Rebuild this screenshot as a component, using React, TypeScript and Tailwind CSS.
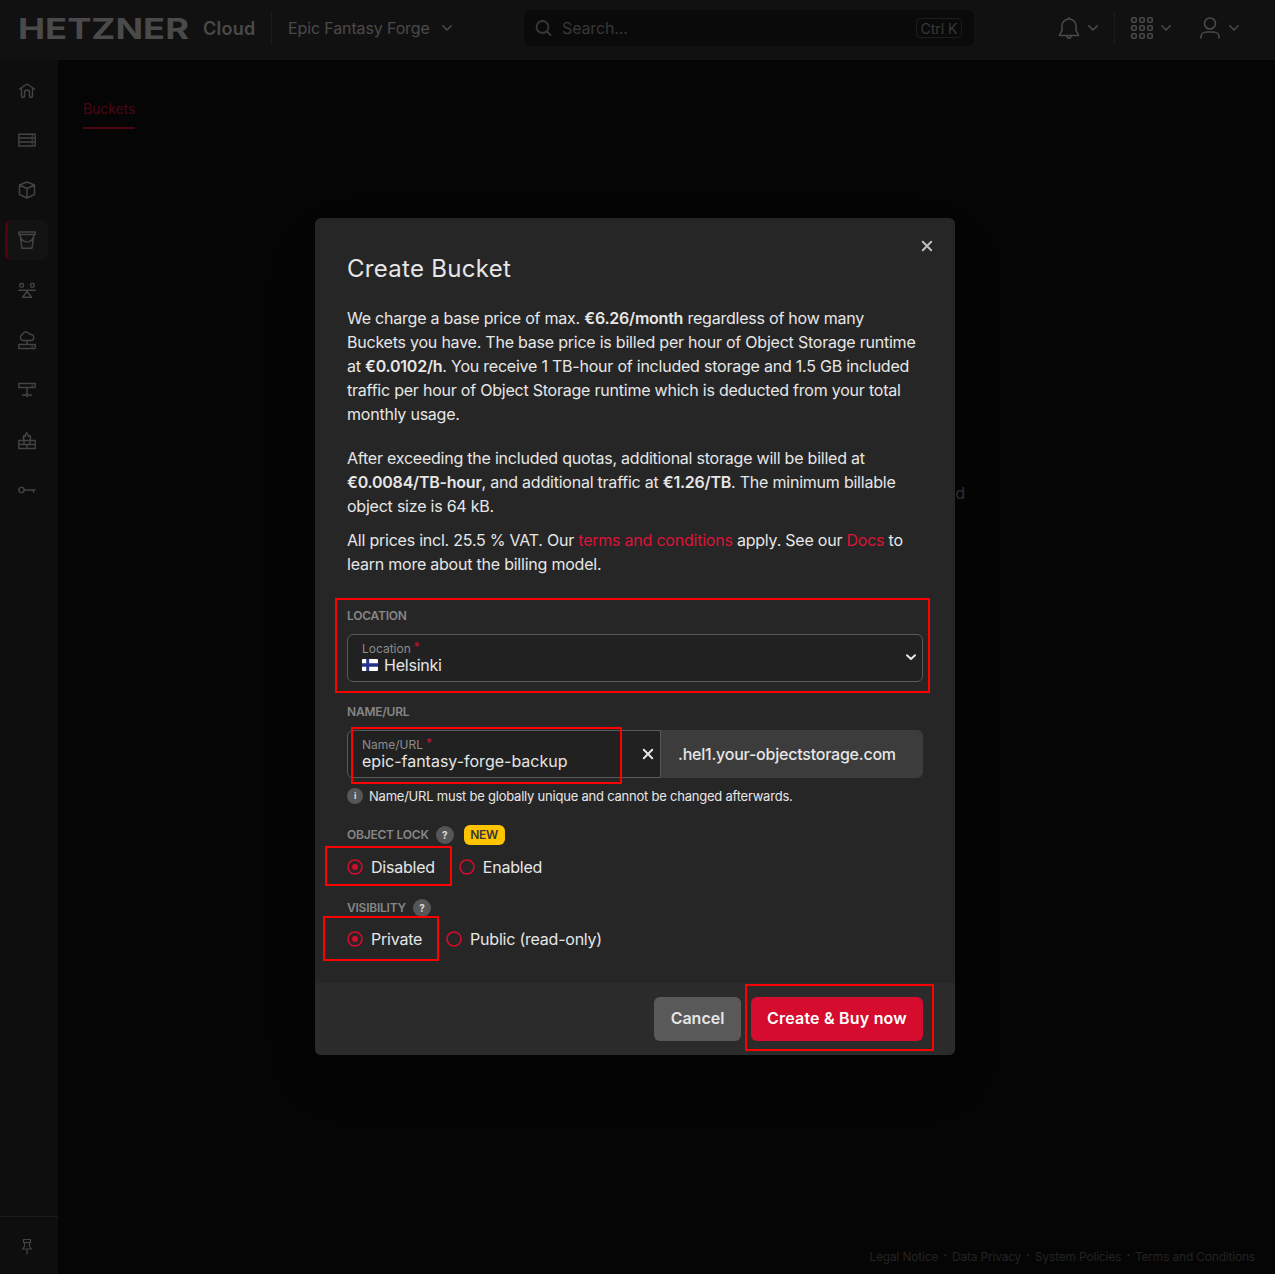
import React from "react";

const Svg = ({
  size = 20,
  box = size,
  width = 1.4,
  className = "",
  children,
}: {
  size?: number;
  box?: number;
  width?: number;
  className?: string;
  children: React.ReactNode;
}) => (
  <svg
    width={size}
    height={size}
    viewBox={`0 0 ${box} ${box}`}
    fill="none"
    stroke="currentColor"
    strokeWidth={width}
    strokeLinecap="round"
    strokeLinejoin="round"
    className={`shrink-0 ${className}`}
  >
    {children}
  </svg>
);

const navItems = [
  {
    name: "home",
    icon: (
      <path d="M2.500 9 10 4l7.500 5M4.500 8.200v7.800c0 1 .5 1.500 1.500 1.500s1.500-.5 1.500-1.500v-3.500a2.500 2.500 0 0 1 5 0V16c0 1 .5 1.500 1.500 1.500s1.500-.5 1.500-1.500V8.200" />
    ),
  },
  {
    name: "servers",
    icon: (
      <path d="M1.800 4.200h16.400v11.800H1.800zM1.800 8h16.400M1.800 12h16.400M15 6h.5M15 10h.5M15 14h.5" />
    ),
  },
  {
    name: "volumes",
    icon: (
      <path d="m10 2 7.500 3v9.500L10 18l-7.500-3.500V5zM2.500 5 10 8.500 17.500 5M10 8.500V18" />
    ),
  },
  {
    name: "buckets",
    active: true,
    icon: (
      <path d="M1.800 2h16.400v2.500H1.800zM3 4.500l2 13.700h10l2-13.700M3.500 7c2.500 6.500 10.500 6.500 13 0" />
    ),
  },
  {
    name: "load balancers",
    icon: (
      <>
        <rect x="2.800" y="3.500" width="3.600" height="3.600" rx="1.200" />
        <rect x="13.600" y="3.500" width="3.600" height="3.600" rx="1.200" />
        <path d="M1.800 10.300h16.400M10 11.500l-4.500 5.800h9z" />
      </>
    ),
  },
  {
    name: "storage",
    icon: (
      <path d="M6 10.500a3 3 0 0 1-.5-5.800C6.200 1.500 11 1 12.500 4.300c2.500-.3 4.300 1.200 4.300 3.200 0 1.800-1.300 3-3 3zM10 10.500v4M1.800 14.500h16.400v4H1.800zM15 16.500h.5" />
    ),
  },
  {
    name: "networks",
    icon: (
      <path d="M1.800 3.500h16.400v4H1.800zM15 5.500h.5M10 7.500v6M5.500 15h3M11.500 15h3M10 13.500l1.500 1.500-1.500 1.500L8.500 15z" />
    ),
  },
  {
    name: "firewalls",
    icon: (
      <path d="M1.800 10.500h16.400v8H1.800zM1.800 14.500h16.400M7 10.500v4M13 10.500v4M10 14.500v4M7.500 10.500C5.500 8.500 6 7 7 5.500l1 1.300c.3-1.800.8-3.300 1.800-4.300.2 2 1.300 2.500 1.700 4l1.200-1.200c1.300 2 1 4-.7 5.200" />
    ),
  },
  {
    name: "keys",
    icon: (
      <>
        <circle cx="4.500" cy="10" r="2.600" />
        <path d="M7.200 10H18M16.500 10v2.300" />
      </>
    ),
  },
];

const Chevron = () => (
  <Svg size={12} width={1.6}>
    <path d="M1.800 3.800 6 8l4.200-4.200" />
  </Svg>
);

const Header = () => {
  return (
    <header className="flex h-[60px] shrink-0 items-center bg-[#111111] pb-1 text-[#4a4a4a]">
      <svg width="173" height="40" className="ml-[18px] shrink-0 overflow-visible">
        <text
          x="0"
          y="31"
          fontSize="29"
          fontWeight="700"
          fill="currentColor"
          textLength="171"
          lengthAdjust="spacingAndGlyphs"
        >
          HETZNER
        </text>
      </svg>
      <span className="ml-3 w-[53px] text-[18px] font-semibold tracking-[0.25px]">
        Cloud
      </span>
      <div className="ml-[15px] h-8 w-px bg-[#1c1c1c]" />
      <div className="ml-4 flex w-[236px] items-center">
        <span className="w-[153px] text-base tracking-[-0.13px]">
          Epic Fantasy Forge
        </span>
        <Chevron />
      </div>
      <div className="flex h-9 w-[450px] items-center rounded-md bg-[#0a0a0a] pr-3 pl-[10px] text-[#383838]">
        <Svg size={18} width={1.8}>
          <circle cx="8.500" cy="8" r="6" />
          <path d="m13 12.500 3.500 3.500" />
        </Svg>
        <span className="ml-[10px] flex-1 text-base tracking-[-0.13px]">
          Search...
        </span>
        <span className="flex h-5 w-[46px] items-center justify-center rounded border border-[#1d1d1d] pt-px text-sm">
          Ctrl K
        </span>
      </div>
      <div className="ml-[83px] flex items-center">
        <Svg size={24} width={1.6}>
          <path d="M12 1.500V3M2.500 19.500h19c0-2-2.500-3-2.500-6V10a7 7 0 0 0-14 0v3.500c0 3-2.500 4-2.500 6zM10 20c0 3 4 3 4 0" />
        </Svg>
        <div className="ml-[6px]">
          <Chevron />
        </div>
        <div className="ml-[15px] h-8 w-px bg-[#1c1c1c]" />
        <Svg size={24} width={1.6} className="ml-[15px]">
          {[4, 12, 20].map((y) =>
            [4, 12, 20].map((x) => (
              <rect
                key={`${x}-${y}`}
                x={x - 2.25}
                y={y - 2.25}
                width="4.500"
                height="4.500"
                rx="1.400"
              />
            ))
          )}
        </Svg>
        <div className="ml-[6px]">
          <Chevron />
        </div>
        <Svg size={24} width={1.6} className="ml-[26px]">
          <circle cx="12" cy="7.500" r="5.500" />
          <path d="M3 22v-1c0-3 2.500-5 5.500-5h7c3 0 5.500 2 5.500 5v1" />
        </Svg>
        <div className="ml-[6px]">
          <Chevron />
        </div>
      </div>
    </header>
  );
};

const Sidebar = () => {
  return (
    <aside className="flex w-[58px] shrink-0 flex-col bg-[#0e0e0e] text-[#444444]">
      <nav className="flex flex-col gap-2.5 pt-2.5 pl-[5px]">
        {navItems.map((item) => (
          <a
            key={item.name}
            className={`flex h-10 w-[43px] items-center rounded-md border-l-[3px] pl-[9px] ${
              item.active
                ? "border-[#4b0511] bg-[#131313]"
                : "border-transparent"
            }`}
          >
            <Svg>{item.icon}</Svg>
          </a>
        ))}
      </nav>
      <div className="mt-auto flex h-[58px] items-center border-t border-[#1c1c1c] pt-0.5 pl-[17px]">
        <Svg width={1.2}>
          <path d="M6.500 2.500h7v3h-7zM7.500 5.500v4L5.500 12h9l-2-2.500v-4M10 12v5" />
        </Svg>
      </div>
    </aside>
  );
};

const Badge = ({ children, small = false }: { children: string; small?: boolean }) => (
  <span
    className={`flex shrink-0 items-center justify-center rounded-full bg-[#565656] font-bold text-[#dddddd] ${
      small ? "size-4 text-[9px]" : "size-[18px] text-[10px]"
    }`}
  >
    {children}
  </span>
);

const Radio = ({ label, checked = false }: { label: string; checked?: boolean }) => (
  <label className="flex items-center gap-2">
    <Svg size={16} width={1.6} className="text-[#d50c2d]">
      <circle cx="8" cy="8" r="7" />
      {checked && <circle cx="8" cy="8" r="3" fill="currentColor" stroke="none" />}
    </Svg>
    {label}
  </label>
);

const FieldLabel = ({ children }: { children: string }) => (
  <span className="text-xs leading-4 font-semibold text-[#868686]">
    {children}
  </span>
);

const InputLabel = ({ children }: { children: string }) => (
  <span className="mt-[6px] text-xs leading-4 tracking-normal text-[#8c8c8c]">
    {children}
    <span className="relative -top-0.5 ml-[3px] text-[#d50c2d]">*</span>
  </span>
);

const Cross = () => (
  <Svg size={12} width={2}>
    <path d="m1.800 1.800 8.400 8.400m0-8.400-8.400 8.400" />
  </Svg>
);

const Modal = () => {
  return (
    <div className="relative flex h-[837px] w-[640px] flex-col overflow-hidden rounded-md bg-[#262626] text-base leading-6 tracking-[-0.225px] text-[#e6e6e6] shadow-2xl">
      <div className="flex flex-1 flex-col px-8">
        <div className="flex h-[88px] justify-between">
          <h2 className="pt-[35px] text-[24px] leading-8 tracking-[0.3px] whitespace-nowrap">
            Create Bucket
          </h2>
          <button className="-mr-[10px] flex h-3 pt-[22px] text-[#bebebe]">
            <Cross />
          </button>
        </div>
        <p>
          We charge a base price of max.{" "}
          <b className="font-semibold">€6.26/month</b> regardless of how many
          <br />
          Buckets you have. The base price is billed per hour of Object Storage
          runtime at <b className="font-semibold">€0.0102/h</b>. You receive 1
          TB-hour of included storage and 1.5 GB included traffic per hour of
          Object Storage runtime which is deducted from your total monthly
          usage.
        </p>
        <p className="mt-5">
          After exceeding the included quotas, additional storage will be billed
          at <b className="font-semibold">€0.0084/TB-hour</b>, and additional
          traffic at <b className="font-semibold">€1.26/TB</b>. The minimum
          billable object size is 64 kB.
        </p>
        <p className="mt-2.5">
          All prices incl. 25.5 % VAT. Our{" "}
          <a className="text-[#dc1438]">terms and conditions</a> apply. See our{" "}
          <a className="text-[#dc1438]">Docs</a> to
          <br />
          learn more about the billing model.
        </p>

        <div className="mt-8 flex flex-col">
          <FieldLabel>LOCATION</FieldLabel>
          <div className="mt-[10px] flex h-12 items-center justify-between rounded-md border border-[#595959] bg-[#212121] pr-[5px] pl-[14px]">
            <div className="flex h-full flex-col">
              <InputLabel>Location</InputLabel>
              <span className="flex items-center gap-1.5 leading-4">
                <svg width="16" height="12" className="rounded-[1px]">
                  <path fill="#ffffff" d="M0 0h16v12H0z" />
                  <path fill="#27348b" d="M0 4.200h16v3.600H0zM4.200 0h3v12h-3z" />
                </svg>
                Helsinki
              </span>
            </div>
            <Svg size={12} width={2} className="-mt-0.5">
              <path d="M2 4.200 6 8l4-3.800" />
            </Svg>
          </div>
        </div>

        <div className="mt-[22px] flex flex-col">
          <FieldLabel>NAME/URL</FieldLabel>
          <div className="mt-[10px] flex h-12">
            <div className="flex w-[314px] items-center justify-between rounded-l-md border border-[#595959] bg-[#212121] pr-[6px] pl-[14px]">
              <div className="flex h-full flex-col">
                <InputLabel>Name/URL</InputLabel>
                <span className="leading-4 tracking-normal">
                  epic-fantasy-forge-backup
                </span>
              </div>
              <Cross />
            </div>
            <div className="flex flex-1 items-center rounded-r-md bg-[#3c3c3c] pl-[17px] font-medium">
              .hel1.your-objectstorage.com
            </div>
          </div>
          <div className="mt-[10px] flex items-center gap-1.5 text-[13px] leading-4">
            <Badge small>i</Badge>
            Name/URL must be globally unique and cannot be changed afterwards.
          </div>
        </div>

        <div className="mt-[21px] flex h-5 items-center">
          <FieldLabel>OBJECT LOCK</FieldLabel>
          <div className="ml-[7px]">
            <Badge>?</Badge>
          </div>
          <span className="ml-2.5 flex h-5 w-[41px] items-center justify-center rounded-md bg-[#ffc400] text-xs font-semibold text-[#383838]">
            NEW
          </span>
        </div>
        <div className="mt-[10px] flex gap-6">
          <Radio label="Disabled" checked />
          <Radio label="Enabled" />
        </div>

        <div className="mt-5 flex h-[18px] items-center gap-[7px]">
          <FieldLabel>VISIBILITY</FieldLabel>
          <Badge>?</Badge>
        </div>
        <div className="mt-[10px] flex gap-6">
          <Radio label="Private" checked />
          <Radio label="Public (read-only)" />
        </div>
      </div>

      <div className="flex h-[72px] items-center justify-end gap-2.5 bg-[#2b2b2b] px-8 font-semibold tracking-[0.2px]">
        <button className="h-11 w-[87px] rounded-md bg-[#595959] pb-0.5 tracking-normal">
          Cancel
        </button>
        <button className="h-11 w-[172px] rounded-md bg-[#d50c2d] pb-0.5 whitespace-nowrap text-white">
          Create &amp; Buy now
        </button>
      </div>

      {/* highlighted steps */}
      <div className="absolute top-[380px] left-5 h-[95px] w-[595px] border-2 border-[#ff0000]" />
      <div className="absolute top-[509px] left-9 h-[57px] w-[271px] border-2 border-[#ff0000]" />
      <div className="absolute top-[628px] left-2.5 h-10 w-[127px] border-2 border-[#ff0000]" />
      <div className="absolute top-[698px] left-2 h-[45px] w-[116px] border-2 border-[#ff0000]" />
      <div className="absolute top-[766px] left-[430px] h-[67px] w-[189px] border-2 border-[#ff0000]" />
    </div>
  );
};

const links = [
  "Legal Notice",
  "Data Privacy",
  "System Policies",
  "Terms and Conditions",
];

export default function App() {
  return (
    <div className="relative flex h-[1274px] w-[1275px] flex-col overflow-hidden bg-[#050505] font-['Inter',sans-serif]">
      <Header />
      <div className="flex flex-1">
        <Sidebar />
        <main className="flex flex-1 flex-col pr-5 pl-[25px]">
          <a className="mt-9 flex h-[33px] w-[52px] border-b-2 border-[#4b0511] pt-[3px] text-sm tracking-[-0.1px] text-[#4b0511]">
            Buckets
          </a>
          <p className="mt-[352px] w-[882px] text-right text-base text-[#333333]">
            d
          </p>
          <footer className="mt-auto mb-[9px] flex justify-end gap-[5px] text-xs tracking-[-0.2px] text-[#232323]">
            {links.map((link, i) => (
              <React.Fragment key={link}>
                {i > 0 && <span className="-mt-0.5 font-bold">·</span>}
                <a>{link}</a>
              </React.Fragment>
            ))}
          </footer>
        </main>
      </div>
      <div className="absolute inset-0 pt-[218px] pl-[315px]">
        <Modal />
      </div>
    </div>
  );
}
